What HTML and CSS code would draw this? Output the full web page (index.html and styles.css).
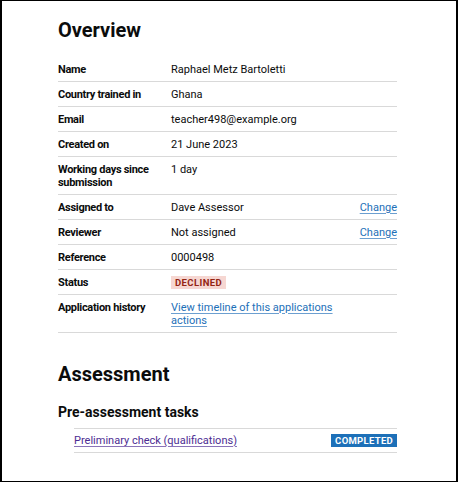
FILE: index.html
```html
<!DOCTYPE html>
<html lang="en">
<head>
<meta charset="utf-8">
<title>Overview</title>
<link rel="stylesheet" href="styles.css">
</head>
<body>
<div class="frame">
  <main class="content">
    <h1 class="heading-l">Overview</h1>
    <dl class="summary">
      <div class="row"><dt class="key">Name</dt><dd class="val">Raphael Metz Bartoletti</dd><dd class="act"></dd></div>
      <div class="row"><dt class="key">Country trained in</dt><dd class="val">Ghana</dd><dd class="act"></dd></div>
      <div class="row"><dt class="key">Email</dt><dd class="val">teacher498@example.org</dd><dd class="act"></dd></div>
      <div class="row"><dt class="key">Created on</dt><dd class="val">21 June 2023</dd><dd class="act"></dd></div>
      <div class="row"><dt class="key">Working days since submission</dt><dd class="val">1 day</dd><dd class="act"></dd></div>
      <div class="row"><dt class="key">Assigned to</dt><dd class="val">Dave Assessor</dd><dd class="act"><a class="link" href="#">Change</a></dd></div>
      <div class="row"><dt class="key">Reviewer</dt><dd class="val">Not assigned</dd><dd class="act"><a class="link" href="#">Change</a></dd></div>
      <div class="row"><dt class="key">Reference</dt><dd class="val">0000498</dd><dd class="act"></dd></div>
      <div class="row"><dt class="key">Status</dt><dd class="val"><strong class="tag tag-red">Declined</strong></dd><dd class="act"></dd></div>
      <div class="row"><dt class="key">Application history</dt><dd class="val"><a class="link" href="#">View timeline of this applications actions</a></dd><dd class="act"></dd></div>
    </dl>
    <h2 class="heading-l section">Assessment</h2>
    <h3 class="heading-m">Pre-assessment tasks</h3>
    <ul class="tasks">
      <li class="task"><a class="link visited" href="#">Preliminary check (qualifications)</a><strong class="tag tag-blue">Completed</strong></li>
    </ul>
  </main>
</div>
</body>
</html>
```
FILE: styles.css
```css
* { box-sizing: border-box; }
html, body { margin: 0; padding: 0; }
body {
  font-family: Roboto, "Liberation Sans", Arial, sans-serif;
  color: #0b0c0c;
  background: #fff;
}
.frame {
  width: 458px;
  height: 482px;
  border-top: 1px solid #000;
  border-bottom: 1px solid #000;
  border-left: 2px solid #000;
  border-right: 2px solid #000;
  overflow: hidden;
}
.content {
  margin-left: 56px;
  width: 339px;
  padding-top: 17px;
}
.heading-l {
  margin: 0 0 15px;
  font-size: 20px;
  line-height: 24px;
  font-weight: 700;
}
.section { margin-top: 29px; margin-bottom: 17px; }
.heading-m {
  margin: 0 0 7px;
  font-size: 14px;
  line-height: 18px;
  font-weight: 700;
}
.summary { margin: 0; padding: 0; }
.row {
  display: grid;
  grid-template-columns: 113px 1fr 56px;
  border-bottom: 1px solid #d9d9d9;
}
.key, .val, .act {
  margin: 0;
  padding: 5.5px 0;
  font-size: 11px;
  line-height: 13px;
}
.key {
  font-weight: 700;
  letter-spacing: -0.3px;
  padding-right: 10px;
}
.act { text-align: right; }
.link {
  color: #1d70b8;
  text-decoration: underline;
  text-decoration-thickness: 1px;
  text-underline-offset: 1.5px;
  text-decoration-color: #6c9fd0;
}
.link.visited { color: #4c2c92; text-decoration-color: #8a73b8; }
.tag {
  display: inline-block;
  font-size: 9.5px;
  line-height: 9px;
  font-weight: 700;
  letter-spacing: 0.4px;
  text-transform: uppercase;
  padding: 2px 4px;
  vertical-align: top;
}
.tag-red { background: #f6d7d2; color: #942514; }
.tag-blue { background: #1d70b8; color: #fff; letter-spacing: 0.3px; }
.tasks {
  list-style: none;
  margin: 0 0 0 16px;
  padding: 0;
  border-top: 1px solid #d9d9d9;
}
.task {
  display: flex;
  justify-content: space-between;
  align-items: center;
  padding: 5px 0;
  font-size: 11px;
  line-height: 13px;
  border-bottom: 1px solid #d9d9d9;
}
```
